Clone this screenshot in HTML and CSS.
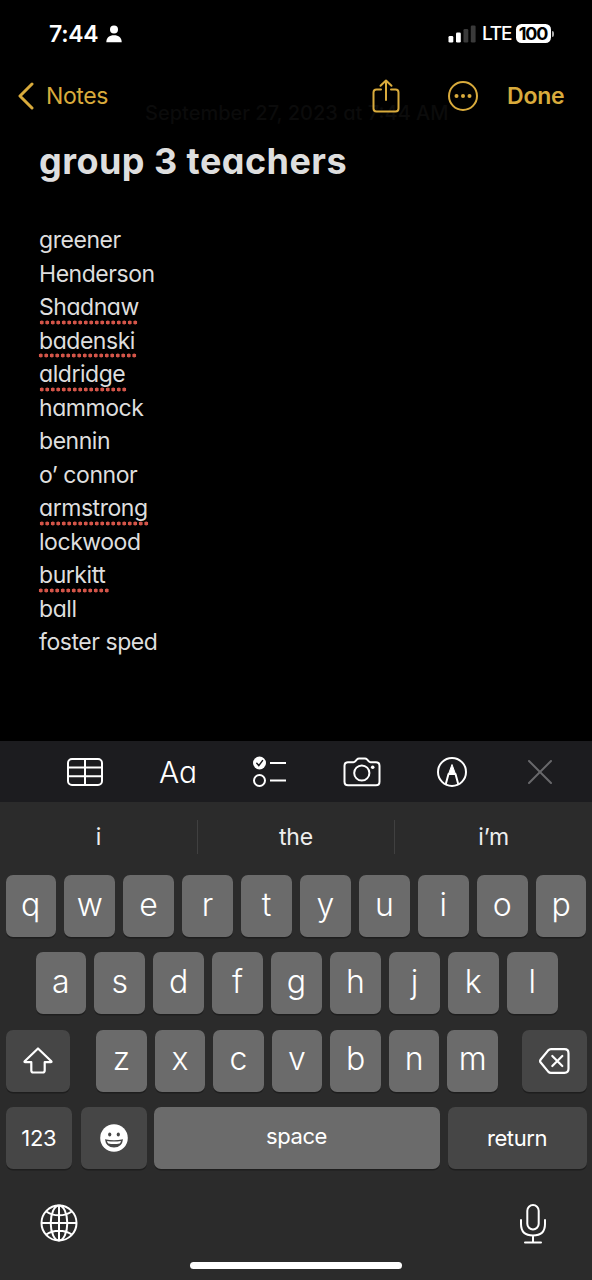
FILE: index.html
```
<!DOCTYPE html>
<html lang="en">
<head>
    <meta charset="utf-8" />
    <title>Notes</title>
    <link rel="stylesheet" href="styles.css">
</head>
<body>
    <div class="phone">

        <!-- Status bar -->
        <div class="status-bar">
            <span class="time">7:44</span>
            <svg class="person" width="16" height="18" viewBox="0 0 16 18" fill="#fff">
                <circle cx="8" cy="4.500" r="4" />
                <path d="M.3 17.200c0-4.500 3-7 7.700-7s7.700 2.500 7.700 7z" />
            </svg>
            <svg class="signal" width="28" height="18" viewBox="0 0 28 18" fill="#fff">
                <rect x=".5" y="11" width="4.800" height="6.500" rx="1.300" />
                <rect x="8" y="7.500" width="4.800" height="10" rx="1.300" />
                <rect x="15.500" y="4" width="4.800" height="13.500" rx="1.300" fill="#3a3a3a" />
                <rect x="22.800" y=".5" width="4.800" height="17" rx="1.300" fill="#3a3a3a" />
            </svg>
            <span class="network">LTE</span>
            <span class="battery">100</span>
            <span class="battery-tip"></span>
        </div>

        <!-- Nav bar -->
        <div class="nav-bar">
            <span class="note-date">September 27, 2023 at 7:44 AM</span>
            <svg class="chevron" width="18" height="28" viewBox="0 0 18 28">
                <path d="M15 2L3 14l12 12" fill="none" stroke="#d9ab3c" stroke-width="3" stroke-linecap="round" stroke-linejoin="round" />
            </svg>
            <span class="back">Notes</span>
            <svg class="share" width="28" height="34" viewBox="0 0 28 34" fill="none" stroke="#d9ab3c" stroke-width="2" stroke-linecap="round" stroke-linejoin="round">
                <path d="M9 10.500H4.500Q1.500 10.500 1.500 13.500V29.500Q1.500 32.500 4.500 32.500H23.500Q26.500 32.500 26.500 29.500V13.500Q26.500 10.500 23.500 10.500H19" />
                <path d="M14 21V1.500M8.500 6.800L14 1.500l5.500 5.300" />
            </svg>
            <svg class="more" width="32" height="32" viewBox="0 0 32 32">
                <circle cx="16" cy="16" r="14" fill="none" stroke="#d9ab3c" stroke-width="2" />
                <circle cx="9.500" cy="16" r="2" fill="#d9ab3c" />
                <circle cx="16" cy="16" r="2" fill="#d9ab3c" />
                <circle cx="22.500" cy="16" r="2" fill="#d9ab3c" />
            </svg>
            <span class="done">Done</span>
        </div>

        <!-- Note -->
        <div class="note">
            <h1 class="note-title">group 3 teachers</h1>
            <ul class="note-lines">
                <li>greener</li>
                <li>Henderson</li>
                <li><span class="typo dots-18">Shadnaw</span></li>
                <li><span class="typo dots-18 early">badenski</span></li>
                <li><span class="typo dots-16">aldridge</span></li>
                <li>hammock</li>
                <li>bennin</li>
                <li>o’ connor</li>
                <li><span class="typo dots-20">armstrong</span></li>
                <li>lockwood</li>
                <li><span class="typo dots-13 early">burkitt</span></li>
                <li>ball</li>
                <li>foster sped</li>
            </ul>
        </div>

        <!-- Format toolbar -->
        <div class="toolbar">
            <svg class="tool-table" width="36" height="28" viewBox="0 0 36 28" fill="none" stroke="#fff" stroke-width="2">
                <rect x="1" y="1" width="34" height="26" rx="4" />
                <path d="M1 9.600h34M1 18.200h34M18 1v26" />
            </svg>
            <span class="tool-text">Aa</span>
            <svg class="tool-list" width="34" height="32" viewBox="0 0 34 32" fill="none" stroke="#fff" stroke-width="2" stroke-linecap="round">
                <circle cx="6.500" cy="7" r="6.500" fill="#fff" stroke="none" />
                <path d="M3.800 7.300l2 2.300 3.700-5" stroke="#1c1c1f" stroke-width="1.500" />
                <circle cx="6.500" cy="24.500" r="5.500" />
                <path d="M17 7h16M17 24.500h16" stroke-linecap="butt" />
            </svg>
            <svg class="tool-camera" width="38" height="30" viewBox="0 0 38 30" fill="none" stroke="#fff" stroke-width="2" stroke-linejoin="round">
                <path d="M5 5.200h5.500q1 0 1.700-.8l1.800-2q.9-1 2-1h6q1.100 0 2 1l1.800 2q.7.8 1.700.8H33q3.500 0 3.500 3.500v16q0 3.500-3.500 3.500H5q-3.500 0-3.500-3.500v-16Q1.500 5.200 5 5.200z" />
                <circle cx="18.800" cy="16" r="7.600" />
                <circle cx="29.700" cy="10.300" r="1.800" fill="#fff" stroke="none" />
            </svg>
            <svg class="tool-markup" width="32" height="32" viewBox="0 0 32 32" fill="none" stroke="#fff" stroke-width="2" stroke-linejoin="round">
                <circle cx="16" cy="16" r="14" />
                <path d="M9.800 28L12.500 18h7l2.700 10" />
                <path d="M16 8.500L19.500 18h-7z" fill="#fff" stroke-width="1" />
            </svg>
            <svg class="tool-close" width="24" height="24" viewBox="0 0 24 24">
                <path d="M1 1l22 22M23 1L1 23" stroke="#68686b" stroke-width="2" stroke-linecap="round" />
            </svg>
        </div>

        <!-- Keyboard -->
        <div class="keyboard">
            <div class="suggestions">
                <span>i</span>
                <span>the</span>
                <span>i’m</span>
            </div>

            <div class="key-row">
                <span class="key">q</span><span class="key">w</span><span class="key">e</span><span class="key">r</span><span class="key">t</span><span class="key">y</span><span class="key">u</span><span class="key">i</span><span class="key">o</span><span class="key">p</span>
            </div>
            <div class="key-row row-middle">
                <span class="key">a</span><span class="key">s</span><span class="key">d</span><span class="key">f</span><span class="key">g</span><span class="key">h</span><span class="key">j</span><span class="key">k</span><span class="key">l</span>
            </div>
            <div class="key-row">
                <span class="key dark shift">
                    <svg width="30" height="27" viewBox="0 0 30 27">
                        <path d="M15 1.500L28.300 14.300q.6.900-.5.900H21.700V23.500q0 2-2 2H10.300q-2 0-2-2V15.200H2.200q-1.100 0-.5-.9z" fill="none" stroke="#fff" stroke-width="2.200" stroke-linejoin="round" />
                    </svg>
                </span>
                <span class="key">z</span><span class="key">x</span><span class="key">c</span><span class="key">v</span><span class="key">b</span><span class="key">n</span><span class="key">m</span>
                <span class="key dark delete">
                    <svg width="31" height="26" viewBox="0 0 31 26" fill="none" stroke="#fff" stroke-width="2.200" stroke-linecap="round" stroke-linejoin="round">
                        <path d="M12 1.200H25.500q4 0 4 4V20.800q0 4-4 4H12q-1.600 0-2.800-1.200L1.700 14.500q-1.200-1.500 0-3L9.200 2.400Q10.400 1.200 12 1.200z" />
                        <path d="M13.300 8l10 10M23.300 8l-10 10" />
                    </svg>
                </span>
            </div>
            <div class="key-row row-bottom">
                <span class="key dark word">123</span>
                <span class="key dark emoji">
                    <svg width="28" height="28" viewBox="0 0 28 28">
                        <circle cx="14" cy="14" r="13.800" fill="#fff" />
                        <ellipse cx="9.700" cy="10.500" rx="1.600" ry="2.100" fill="#464646" />
                        <ellipse cx="18.300" cy="10.500" rx="1.600" ry="2.100" fill="#464646" />
                        <path d="M5 15.300q9 2 18 0-.8 8.200-9 8.200T5 15.300z" fill="#464646" />
                        <path d="M7 16.900q7 1.300 14 0-.4 1.700-1.300 2.500-5.700 1-11.400 0-.9-.8-1.300-2.500z" fill="#fff" />
                    </svg>
                </span>
                <span class="key word space">space</span>
                <span class="key dark word return">return</span>
            </div>

            <div class="keyboard-footer">
                <svg width="38" height="38" viewBox="0 0 38 38" fill="none" stroke="#fff" stroke-width="2">
                    <circle cx="19" cy="19" r="17.500" />
                    <ellipse cx="19" cy="19" rx="8.300" ry="17.500" />
                    <path d="M19 1.500v35M1.500 19h35M6.300 7.500q5.200 3.800 12.700 3.800t12.700-3.800M6.300 30.500q5.200-3.800 12.700-3.800t12.700 3.800" />
                </svg>
                <svg width="28" height="40" viewBox="0 0 28 40" fill="none" stroke="#fff" stroke-width="2" stroke-linecap="round">
                    <rect x="8.300" y="1" width="11.400" height="24.500" rx="5.700" />
                    <path d="M2 16v4q0 11.500 12 11.500T26 20v-4M14 31.500v7M6 38.500h16" />
                </svg>
            </div>
            <div class="home-indicator"></div>
        </div>
    </div>
</body>
</html>
```

FILE: styles.css
```
* {
    box-sizing: border-box;
}

body {
    background-color: #000;
    color: #fff;
    font-family: Inter, "Liberation Sans", sans-serif;
    margin: 0;
    padding: 0;
}

svg {
    display: block;
    flex: none;
}

.phone {
    display: flex;
    flex-direction: column;
    width: 592px;
    height: 1280px;
    overflow: hidden;
}

/* status bar */
.status-bar {
    display: flex;
    align-items: center;
    height: 67px;
    padding: 0 38px 0 49px;
}

.time {
    width: 57px;
    font-size: 23px;
    font-weight: 600;
    letter-spacing: -0.3px;
}

.signal {
    margin-left: auto;
}

.network {
    flex: none;
    width: 40px;
    padding-left: 6px;
    font-size: 19px;
    font-weight: 500;
    letter-spacing: -1.2px;
}

.battery {
    flex: none;
    width: 35px;
    height: 19px;
    border-radius: 5.5px;
    background-color: #fff;
    color: #000;
    font-size: 18px;
    font-weight: 700;
    line-height: 19px;
    letter-spacing: -1.1px;
    text-indent: -1px;
    text-align: center;
}

.battery-tip {
    width: 2px;
    height: 6px;
    margin-left: 1px;
    border-radius: 0 2px 2px 0;
    background-color: #aaa;
}

/* nav bar */
.nav-bar {
    position: relative;
    display: flex;
    align-items: center;
    height: 57px;
    padding: 0 27px 0 17px;
    color: #d9ab3c;
    font-size: 23px;
}

.chevron,
.back,
.share,
.more,
.done {
    position: relative;
}

.back {
    margin-left: 11px;
    letter-spacing: -0.4px;
}

.share {
    margin-left: auto;
    margin-right: 47px;
}

.more {
    margin-right: 28px;
}

.done {
    width: 58px;
    font-weight: 600;
    letter-spacing: -0.2px;
}

/* date line fading out behind the bar */
.note-date {
    position: absolute;
    left: 145px;
    top: 34px;
    color: #0b0b0b;
    font-size: 20px;
    font-weight: 500;
    font-feature-settings: "cv11";
    white-space: nowrap;
}

/* note */
.note {
    flex: 1;
    padding: 15px 39px 0;
    color: #dedede;
    font-feature-settings: "cv11";
}

.note-title {
    margin: 0 0 40px;
    font-size: 36px;
    font-weight: 700;
    line-height: 45px;
    letter-spacing: 0.45px;
}

.note-lines {
    margin: 0;
    padding: 0;
    list-style: none;
    font-size: 23px;
    line-height: 33.5px;
    letter-spacing: -0.45px;
}

.typo {
    display: block;
    background-image: radial-gradient(circle, #d45549 1.7px, transparent 2.3px);
    background-size: 5.5px 5px;
    background-repeat: repeat-x;
    background-position: 0 100%;
}

.early {
    margin-left: -1.5px;
    padding-left: 1.5px;
}

.dots-13 {
    width: 71.5px;
}

.dots-16 {
    width: 88px;
}

.dots-18 {
    width: 99px;
}

.dots-20 {
    width: 110px;
}

/* toolbar */
.toolbar {
    display: flex;
    align-items: center;
    height: 61px;
    padding: 0 40px 0 67px;
    background-color: #1c1c1f;
}

.tool-text {
    width: 150px;
    padding-left: 56px;
    font-size: 30px;
    font-weight: 300;
    font-feature-settings: "cv11";
}

.tool-camera {
    margin-left: 56px;
}

.tool-markup {
    margin-left: 55px;
}

.tool-close {
    margin-left: auto;
}

/* keyboard */
.keyboard {
    height: 478px;
    padding: 0 5.5px;
    background-color: #2b2b2b;
}

.suggestions {
    display: flex;
    height: 73px;
    margin: 0 -5.5px;
    padding-top: 18px;
    color: #eee;
    font-size: 23px;
    letter-spacing: -0.2px;
}

.suggestions span {
    flex: 1;
    height: 34px;
    line-height: 34px;
    text-align: center;
}

.suggestions span + span {
    border-left: 1px solid #404040;
}

.key-row {
    display: flex;
    justify-content: space-between;
    margin-bottom: 15.3px;
}

.key {
    display: flex;
    align-items: center;
    justify-content: center;
    width: 50.5px;
    height: 62px;
    padding-bottom: 4px;
    border-radius: 7px;
    background-color: #6b6b6b;
    box-shadow: 0 1.5px 0 #1e1e1e;
    font-size: 32px;
    font-weight: 330;
}

.dark {
    padding-bottom: 0;
    background-color: #464646;
}

.row-middle {
    margin-left: 30px;
    margin-right: 29px;
}

.shift {
    width: 64.5px;
    margin-right: 18px;
}

.delete {
    width: 64.5px;
    margin-left: 16px;
}

.row-bottom {
    justify-content: flex-start;
}

.word {
    width: 66.5px;
    font-size: 22px;
    font-weight: 400;
    letter-spacing: -0.4px;
}

.emoji {
    width: 66.5px;
    margin: 0 6.5px 0 8.5px;
}

.space {
    width: 286px;
}

.return {
    width: 139px;
    margin-left: 8px;
}

.keyboard-footer {
    display: flex;
    justify-content: space-between;
    padding: 20px 40px 0 34px;
}

.home-indicator {
    width: 212px;
    height: 7px;
    margin: 18px auto 0;
    border-radius: 4px;
    background-color: #fff;
}
```
